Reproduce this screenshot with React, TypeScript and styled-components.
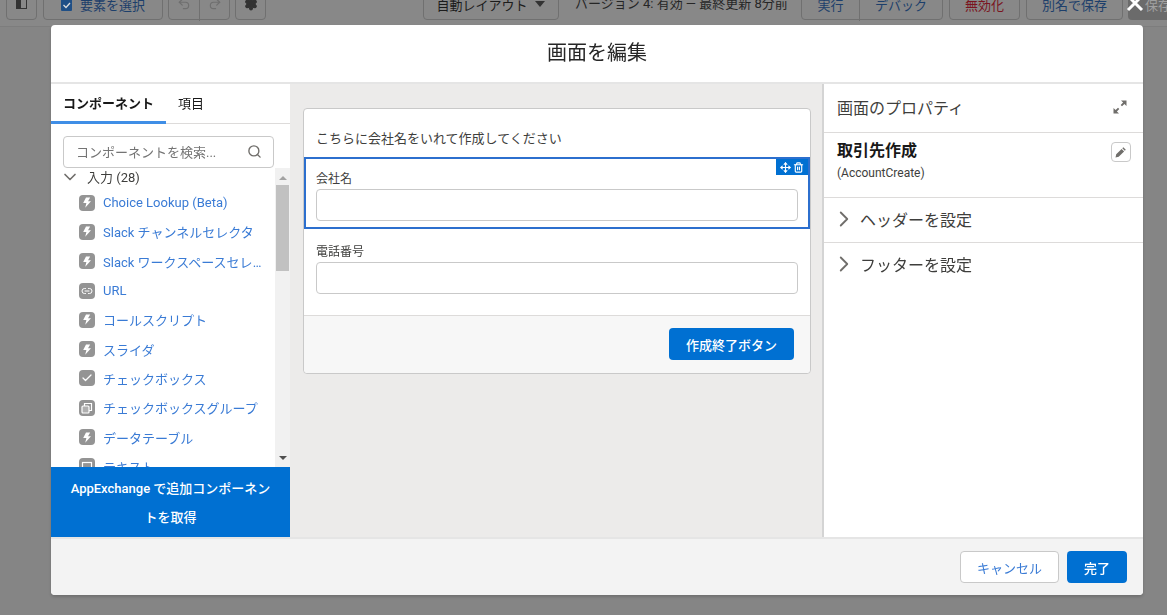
import React from 'react';
import styled, {createGlobalStyle} from "styled-components";
import {ChevronDown, ChevronRight, Search, Undo2, Redo2, Settings, Link2, Check, Move, Trash2} from "lucide-react";

const GlobalStyle = createGlobalStyle`
  html, body {
    margin: 0;
    height: 100%;
    overflow: hidden;
    background: #858585;
    font-family: Roboto, "Noto Sans CJK JP", sans-serif;
    color: #181818;
  }
  * {
    box-sizing: border-box;
  }
`;

const Toolbar = styled.div`
  height: 27px;
  padding: 0 0 6px 6px;
  display: flex;
  align-items: flex-end;
  overflow: hidden;
  background: #888;
  border-bottom: 1px solid #7d7d7d;
`;

const ToolButton = styled.div<{$w: number; $ml?: number; $color?: string}>`
  flex: none;
  width: ${p => p.$w}px;
  height: 32px;
  margin-left: ${p => p.$ml ?? 0}px;
  display: flex;
  align-items: center;
  justify-content: center;
  gap: 6px;
  font-size: 13px;
  color: ${p => p.$color ?? "#1d3f6b"};
  background: #888;
  border: 1px solid #707070;
  border-radius: 4px;
`;

const ToolSplit = styled.div`
  width: 1px;
  height: 32px;
  background: #707070;
`;

const ToolGroup = styled.div<{$w: number; $ml: number}>`
  flex: none;
  display: flex;
  width: ${p => p.$w}px;
  height: 32px;
  margin-left: ${p => p.$ml}px;
  border: 1px solid #707070;
  border-radius: 4px;
`;

const GroupCell = styled.div<{$w?: number}>`
  flex: ${p => (p.$w ? "none" : "1")};
  width: ${p => (p.$w ? `${p.$w}px` : "auto")};
  display: flex;
  align-items: center;
  justify-content: center;
  font-size: 13px;
  color: #1d3f6b;
`;

const VersionText = styled.div`
  flex: none;
  width: 226px;
  margin-left: 16px;
  padding-bottom: 8px;
  font-size: 13px;
  line-height: 17px;
  color: #262626;
  white-space: nowrap;
`;

const SaveButton = styled.div`
  flex: none;
  width: 100px;
  height: 32px;
  margin-left: 5px;
  padding: 7px 0 0 17px;
  font-size: 13px;
  color: #a0a0a0;
  background: #6b6b6b;
  border-radius: 4px;
`;

const CloseIcon = styled.svg`
  position: fixed;
  top: -6px;
  left: 1126px;
`;

const Modal = styled.div`
  position: fixed;
  left: 51px;
  top: 25px;
  width: 1092px;
  height: 570px;
  display: flex;
  flex-direction: column;
  background: #fff;
  border-radius: 4px;
  overflow: hidden;
  box-shadow: 0 2px 3px rgba(0, 0, 0, 0.16);
`;

const ModalHeader = styled.div`
  flex: none;
  height: 59px;
  padding-top: 12px;
  text-align: center;
  font-size: 20px;
  line-height: 33px;
  color: #262626;
  border-bottom: 2px solid #e5e5e5;
`;

const ModalBody = styled.div`
  flex: 1;
  min-height: 0;
  display: flex;
`;

const ModalFooter = styled.div`
  flex: none;
  height: 58px;
  padding: 12px 16px 0 0;
  display: flex;
  justify-content: flex-end;
  gap: 8px;
  background: #f3f3f3;
  border-top: 2px solid #e5e5e5;
`;

const NeutralButton = styled.div`
  width: 99px;
  height: 32px;
  display: flex;
  align-items: center;
  justify-content: center;
  font-size: 13px;
  color: #3a7bd5;
  background: #fff;
  border: 1px solid #c9c9c9;
  border-radius: 4px;
`;

const BrandButton = styled.div<{$w: number}>`
  width: ${p => p.$w}px;
  height: 32px;
  display: flex;
  align-items: center;
  justify-content: center;
  font-size: 13px;
  font-weight: 500;
  color: #fff;
  background: #0070d2;
  border-radius: 4px;
`;

const LeftPanel = styled.div`
  flex: none;
  width: 239px;
  display: flex;
  flex-direction: column;
`;

const Tabs = styled.div`
  flex: none;
  height: 40px;
  display: flex;
  border-bottom: 1px solid #dddbda;
`;

const Tab = styled.div<{$active?: boolean; $w: number}>`
  width: ${p => p.$w}px;
  height: 40px;
  padding-top: 11px;
  font-size: 13px;
  line-height: 18px;
  text-align: center;
  font-weight: ${p => (p.$active ? 700 : 400)};
  color: #181818;
  border-bottom: ${p => (p.$active ? "3px solid #3f8ee6" : "none")};
`;

const SearchBox = styled.div`
  flex: none;
  height: 32px;
  margin: 12px 16px 0 12px;
  padding: 0 11px 1px 12px;
  display: flex;
  align-items: center;
  justify-content: space-between;
  font-size: 13px;
  color: #747474;
  background: #fff;
  border: 1px solid #c9c9c9;
  border-radius: 4px;
`;

const ListArea = styled.div`
  flex: 1;
  min-height: 0;
  display: flex;
`;

const ListScroll = styled.div`
  flex: 1;
  min-width: 0;
  overflow: hidden;
`;

const SectionTitle = styled.div`
  height: 23px;
  margin-top: -3px;
  padding-left: 9px;
  display: flex;
  align-items: center;
  gap: 7px;
  font-size: 13px;
  color: #3e3e3c;
`;

const Item = styled.div`
  height: 29.3px;
  padding-left: 28px;
  display: flex;
  align-items: center;
  gap: 8px;
  font-size: 13px;
  color: #3a7bd5;
  white-space: nowrap;
`;

const ItemIcon = styled.span`
  flex: none;
  width: 16px;
  height: 16px;
  display: flex;
  align-items: center;
  justify-content: center;
  color: #fff;
  background: #949494;
  border-radius: 4px;
`;

const ItemLabel = styled.span`
  width: 160px;
  overflow: hidden;
  text-overflow: ellipsis;
`;

const ScrollTrack = styled.div`
  flex: none;
  width: 15px;
  display: flex;
  flex-direction: column;
  align-items: center;
  background: #f1f1f1;
`;

const ScrollThumb = styled.div`
  width: 13px;
  height: 86px;
  margin-top: 5px;
  background: #c1c1c1;
`;

const ArrowUp = styled.div`
  margin-top: 8px;
  width: 0;
  height: 0;
  border-left: 4px solid transparent;
  border-right: 4px solid transparent;
  border-bottom: 4px solid #a3a3a3;
`;

const ArrowDown = styled.div`
  margin-top: auto;
  margin-bottom: 7px;
  width: 0;
  height: 0;
  border-left: 4px solid transparent;
  border-right: 4px solid transparent;
  border-top: 4px solid #505050;
`;

const ExchangeBanner = styled.div`
  flex: none;
  height: 70px;
  padding: 7px 16px 0;
  font-size: 13px;
  line-height: 29px;
  font-weight: 500;
  text-align: center;
  color: #fff;
  background: #0070d2;
`;

const Canvas = styled.div`
  flex: 1;
  min-width: 0;
  padding: 24px 11px 0 13px;
  background: #ecebea;
`;

const Card = styled.div`
  height: 266px;
  display: flex;
  flex-direction: column;
  background: #fff;
  border: 1px solid #c9c9c9;
  border-radius: 4px;
`;

const CardIntro = styled.div`
  flex: none;
  height: 48px;
  padding: 21px 0 0 12px;
  font-size: 13px;
  line-height: 18px;
  color: #3e3e3c;
`;

const Field = styled.div<{$selected?: boolean}>`
  position: relative;
  flex: none;
  height: 72px;
  padding: ${p => (p.$selected ? "11px 10px 0 10px" : "14px 12px 0 12px")};
  ${p => p.$selected && "border: 2px solid #2c6fce;"}
`;

const FieldLabel = styled.div`
  height: 19px;
  font-size: 12px;
  line-height: 18px;
  color: #3e3e3c;
`;

const FieldInput = styled.div`
  height: 32px;
  background: #fff;
  border: 1px solid #c9c9c9;
  border-radius: 4px;
`;

const FieldBadge = styled.div`
  position: absolute;
  top: 0;
  right: 0;
  width: 32px;
  height: 16px;
  display: flex;
  align-items: center;
  justify-content: center;
  gap: 2px;
  color: #fff;
  background: #0070d2;
`;

const CardFooter = styled.div`
  flex: 1;
  margin-top: 14px;
  padding: 12px 16px 0 0;
  display: flex;
  justify-content: flex-end;
  background: #f7f7f7;
  border-top: 1px solid #dddbda;
  border-radius: 0 0 4px 4px;
`;

const RightPanel = styled.div`
  flex: none;
  width: 321px;
  background: #fff;
  border-left: 2px solid #d4d4d4;
`;

const PanelHeader = styled.div`
  height: 49px;
  padding: 0 16px 2px 13px;
  display: flex;
  align-items: center;
  justify-content: space-between;
  font-size: 16px;
  color: #3e3e3c;
  border-bottom: 1px solid #dddbda;
`;

const PanelInfo = styled.div`
  height: 65px;
  padding: 8px 12px 0 13px;
  display: flex;
  justify-content: space-between;
  border-bottom: 1px solid #dddbda;
`;

const InfoTitle = styled.div`
  font-size: 16px;
  line-height: 20px;
  font-weight: 700;
  color: #181818;
`;

const InfoName = styled.div`
  margin-top: 3px;
  font-size: 12px;
  line-height: 18px;
  color: #3e3e3c;
`;

const EditButton = styled.div`
  width: 20px;
  height: 20px;
  margin-top: 1px;
  display: flex;
  align-items: center;
  justify-content: center;
  background: #fff;
  border: 1px solid #c9c9c9;
  border-radius: 4px;
`;

const SetupRow = styled.div`
  height: 45px;
  padding: 0 0 2px 7px;
  display: flex;
  align-items: center;
  gap: 3px;
  font-size: 16px;
  color: #3e3e3c;
  border-bottom: 1px solid #dddbda;

  &:last-child {
    border-bottom-color: transparent;
  }
`;

const Bolt = () => (
  <svg width="10" height="11" viewBox="0 0 10 11" fill="currentColor">
    <path d="M4 0.5h4.2L6 4.2h3L3.2 10.8 4.4 6H1.2z"/>
  </svg>
);

const GroupIcon = () => (
  <svg width="12" height="12" viewBox="0 0 12 12" fill="none" stroke="currentColor" strokeWidth="1.2">
    <rect x="1" y="4" width="7" height="7" rx="1" fill="currentColor" fillOpacity="0.25"/>
    <path d="M3.5 4V1.5h7v7H8"/>
  </svg>
);

const TextIcon = () => (
  <svg width="12" height="12" viewBox="0 0 12 12" fill="none" stroke="currentColor" strokeWidth="1.2">
    <rect x="1.5" y="2.5" width="9" height="7"/>
  </svg>
);

const items: {label: string; icon: React.ReactNode}[] = [
  {label: "Choice Lookup (Beta)", icon: <Bolt/>},
  {label: "Slack チャンネルセレクタ", icon: <Bolt/>},
  {label: "Slack ワークスペースセレクタ", icon: <Bolt/>},
  {label: "URL", icon: <Link2 size={12} strokeWidth={2}/>},
  {label: "コールスクリプト", icon: <Bolt/>},
  {label: "スライダ", icon: <Bolt/>},
  {label: "チェックボックス", icon: <Check size={12} strokeWidth={2.5}/>},
  {label: "チェックボックスグループ", icon: <GroupIcon/>},
  {label: "データテーブル", icon: <Bolt/>},
  {label: "テキスト", icon: <TextIcon/>},
];

const App = () => {
  return (
    <>
      <GlobalStyle/>
      <Toolbar>
        <ToolButton $w={31}>
          <svg width="11" height="10" viewBox="0 0 11 10" fill="none" stroke="#333" strokeWidth="1">
            <rect x="0.5" y="0.5" width="10" height="9"/>
            <rect x="0.5" y="0.5" width="4" height="9" fill="#333"/>
          </svg>
        </ToolButton>
        <ToolButton $w={120} $ml={6}>
          <svg width="13" height="13" viewBox="0 0 13 13">
            <rect y="1" width="11" height="12" rx="1" fill="#1f4f86"/>
            <path d="M2.5 7l2.5 2.5L9 5" fill="none" stroke="#ddd" strokeWidth="1.3"/>
          </svg>
          要素を選択
        </ToolButton>
        <ToolGroup $w={62} $ml={5}>
          <GroupCell $w={30}><Undo2 size={14} color="#6f6f6f"/></GroupCell>
          <ToolSplit/>
          <GroupCell><Redo2 size={14} color="#6f6f6f"/></GroupCell>
        </ToolGroup>
        <ToolButton $w={31} $ml={5}><Settings size={14} color="#333" fill="#333"/></ToolButton>
        <ToolButton $w={136} $ml={157} $color="#1c1c1c">
          自動レイアウト
          <svg width="12" height="7" viewBox="0 0 12 7" fill="#333"><path d="M1 0h10L6 6z"/></svg>
        </ToolButton>
        <VersionText>バージョン 4: 有効 — 最終更新 8分前</VersionText>
        <ToolGroup $w={142} $ml={0}>
          <GroupCell $w={57}>実行</GroupCell>
          <ToolSplit/>
          <GroupCell>デバック</GroupCell>
        </ToolGroup>
        <ToolButton $w={71} $ml={6} $color="#7a1420">無効化</ToolButton>
        <ToolButton $w={97} $ml={6}>別名で保存</ToolButton>
        <SaveButton>保存</SaveButton>
      </Toolbar>
      <CloseIcon width="18" height="18" viewBox="0 0 18 18" fill="none" stroke="#fff" strokeWidth="3">
        <path d="M2 2l14 14M16 2L2 16"/>
      </CloseIcon>
      <Modal>
        <ModalHeader>画面を編集</ModalHeader>
        <ModalBody>
          <LeftPanel>
            <Tabs>
              <Tab $active $w={115}>コンポーネント</Tab>
              <Tab $w={50}>項目</Tab>
            </Tabs>
            <SearchBox>
              コンポーネントを検索...
              <Search size={15} color="#706e6b" strokeWidth={2.2}/>
            </SearchBox>
            <ListArea>
              <ListScroll>
                <SectionTitle>
                  <ChevronDown size={20} color="#706e6b" strokeWidth={2}/>
                  入力 (28)
                </SectionTitle>
                {items.map(item => (
                  <Item key={item.label}>
                    <ItemIcon>{item.icon}</ItemIcon>
                    <ItemLabel>{item.label}</ItemLabel>
                  </Item>
                ))}
              </ListScroll>
              <ScrollTrack>
                <ArrowUp/>
                <ScrollThumb/>
                <ArrowDown/>
              </ScrollTrack>
            </ListArea>
            <ExchangeBanner>AppExchange で追加コンポーネントを取得</ExchangeBanner>
          </LeftPanel>
          <Canvas>
            <Card>
              <CardIntro>こちらに会社名をいれて作成してください</CardIntro>
              <Field $selected>
                <FieldLabel>会社名</FieldLabel>
                <FieldInput/>
                <FieldBadge>
                  <Move size={11} strokeWidth={2.5}/>
                  <Trash2 size={11} strokeWidth={2.5}/>
                </FieldBadge>
              </Field>
              <Field>
                <FieldLabel>電話番号</FieldLabel>
                <FieldInput/>
              </Field>
              <CardFooter>
                <BrandButton $w={125}>作成終了ボタン</BrandButton>
              </CardFooter>
            </Card>
          </Canvas>
          <RightPanel>
            <PanelHeader>
              画面のプロパティ
              <svg width="14" height="14" viewBox="0 0 14 14" fill="#706e6b">
                <path d="M8 0.5h5.5V6L11.4 3.9 9 6.3 7.7 5 10.1 2.6z"/>
                <path d="M6 13.5H0.5V8l2.1 2.1L5 7.7 6.3 9 3.9 11.4z"/>
              </svg>
            </PanelHeader>
            <PanelInfo>
              <div>
                <InfoTitle>取引先作成</InfoTitle>
                <InfoName>(AccountCreate)</InfoName>
              </div>
              <EditButton>
                <svg width="12" height="12" viewBox="0 0 12 12" fill="#706e6b">
                  <path d="M8.3 1.2l2.5 2.5-1 1-2.5-2.5zM6.6 2.9l2.5 2.5-5.4 5.4-3.2.7.7-3.2z"/>
                </svg>
              </EditButton>
            </PanelInfo>
            <SetupRow>
              <ChevronRight size={26} color="#706e6b" strokeWidth={1.7}/>
              ヘッダーを設定
            </SetupRow>
            <SetupRow>
              <ChevronRight size={26} color="#706e6b" strokeWidth={1.7}/>
              フッターを設定
            </SetupRow>
          </RightPanel>
        </ModalBody>
        <ModalFooter>
          <NeutralButton>キャンセル</NeutralButton>
          <BrandButton $w={60}>完了</BrandButton>
        </ModalFooter>
      </Modal>
    </>
  );
};

export default App;
